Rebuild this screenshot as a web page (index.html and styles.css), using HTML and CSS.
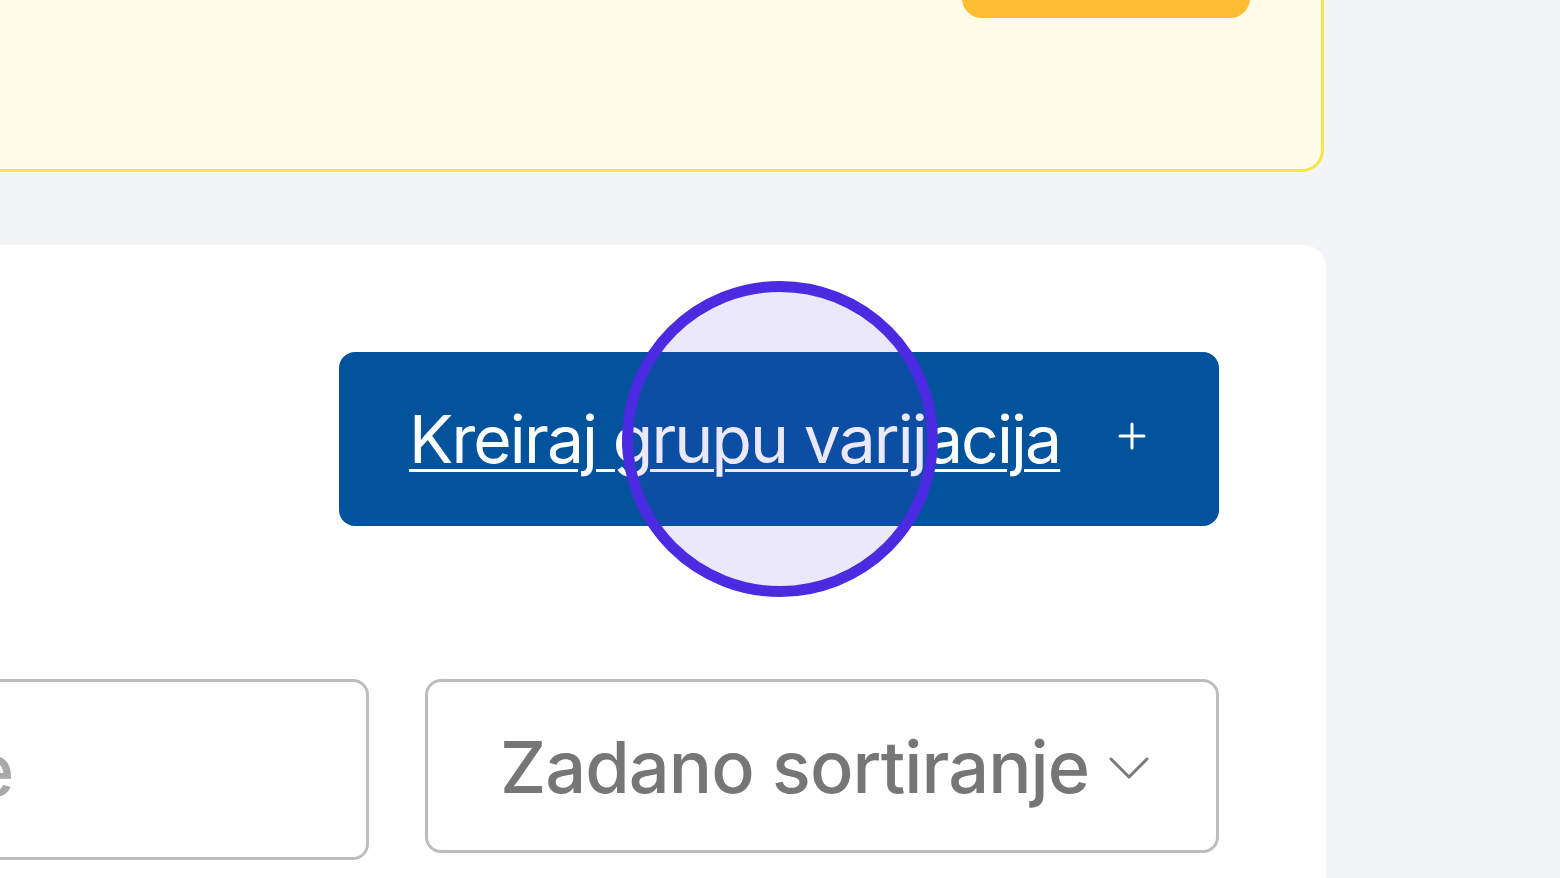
FILE: index.html
```html
<!DOCTYPE html>
<html lang="hr">
<head>
<meta charset="utf-8">
<title>Grupe varijacija</title>
<link rel="stylesheet" href="styles.css">
</head>
<body>
<div class="wrap">
  <section class="notice">
    <p class="notice-text">Proizvod nema varijacija. Kreirajte grupu</p>
    <button class="notice-btn" type="button">Saznaj više</button>
  </section>

  <section class="card">
    <div class="card-head">
      <button class="create-btn" type="button">
        <span class="create-label">Kreiraj grupu varijacija</span>
        <svg class="plus" width="28" height="28" viewBox="0 0 28 28" aria-hidden="true">
          <path d="M14 2v24M2 14h24" stroke="#ffffff" stroke-width="3" stroke-linecap="round" fill="none"/>
        </svg>
      </button>
    </div>
    <div class="filters">
      <div class="search"><span class="placeholder">Pretraži grupe</span></div>
      <div class="select">
        <span class="select-label">Zadano sortiranje</span>
        <svg class="chev" width="40" height="26" viewBox="0 0 40 26" aria-hidden="true">
          <path d="M2 4l18 18L38 4" stroke="#7a7a7a" stroke-width="3" fill="none" stroke-linecap="round" stroke-linejoin="round"/>
        </svg>
      </div>
    </div>
  </section>
</div>
<div class="click-ring"></div>
</body>
</html>
```

FILE: styles.css
```css
html, body {
  margin: 0;
  padding: 0;
}
body {
  background: #f3f4f6;
  font-family: Inter, "Noto Sans", Arial, sans-serif;
  width: 1560px;
  height: 878px;
  overflow: hidden;
  position: relative;
}
.wrap {
  margin-left: -690px;
  margin-top: -128px;
  width: 2016px;
  display: flex;
  flex-direction: column;
  gap: 73px;
}
.notice {
  box-sizing: border-box;
  width: 2014px;
  height: 300px;
  background: #fffde8;
  border: 3px solid #fce34c;
  border-radius: 22px;
  padding: 53px 71px 0 80px;
  display: flex;
  align-items: flex-start;
  justify-content: space-between;
}
.notice-text {
  margin: -8px 0 0 0;
  font-size: 60px;
  line-height: 90px;
  color: #7a6a14;
  white-space: nowrap;
  min-width: 0;
  overflow: hidden;
}
.notice-btn {
  width: 288px;
  height: 90px;
  border: 0;
  border-radius: 20px;
  background: #ffbd33;
  color: #ffffff;
  font: inherit;
  flex: none;
}
.card {
  box-sizing: border-box;
  background: #ffffff;
  border-radius: 22px;
  height: 760px;
  padding: 107px 107px 0 107px;
  display: flex;
  flex-direction: column;
  gap: 153px;
}
.card-head {
  display: flex;
  justify-content: flex-end;
}
.create-btn {
  box-sizing: border-box;
  width: 880px;
  height: 174px;
  border: 0;
  border-radius: 16px;
  background: #03539c;
  color: #ffffff;
  font-family: Inter, "Noto Sans", Arial, sans-serif;
  display: flex;
  align-items: center;
  padding: 0 73px 0 70px;
  justify-content: space-between;
}
.create-label {
  font-size: 66px;
  font-weight: 400;
  letter-spacing: -1.9px;
  text-decoration: underline;
  text-decoration-thickness: 3px;
  text-underline-offset: 6px;
}
.plus {
  margin-top: -6px;
}
.filters {
  display: flex;
  gap: 56px;
  align-items: flex-start;
}
.search {
  box-sizing: border-box;
  flex: 1;
  height: 181px;
  border: 3px solid #bdbdbd;
  border-radius: 16px;
  display: flex;
  align-items: center;
  padding-left: 118px;
}
.placeholder {
  font-size: 72px;
  color: #a9a9a9;
  font-weight: 500;
  letter-spacing: -0.9px;
}
.select {
  box-sizing: border-box;
  width: 794px;
  height: 174px;
  border: 3px solid #bdbdbd;
  border-radius: 16px;
  display: flex;
  align-items: center;
  padding-left: 72px;
  gap: 20px;
}
.select-label {
  font-size: 72px;
  font-weight: 500;
  letter-spacing: -0.9px;
  color: #767676;
}
.chev {
  margin-top: 4px;
}
.click-ring {
  position: absolute;
  left: 622px;
  top: 281px;
  width: 316px;
  height: 316px;
  box-sizing: border-box;
  border: 11px solid #4b2be2;
  border-radius: 50%;
  background: rgba(79, 47, 227, 0.11);
  pointer-events: none;
}
```
